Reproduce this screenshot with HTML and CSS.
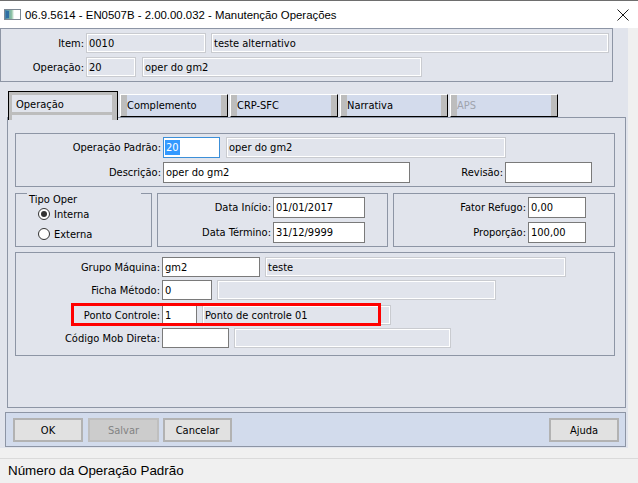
FILE: index.html
```html
<!DOCTYPE html>
<html lang="pt-BR">
<head>
  <meta charset="UTF-8">
  <title>Manutenção Operações</title>
  <link rel="stylesheet" href="styles.css">
</head>
<body>

  <div class="titlebar">
    <svg class="app-icon" width="18" height="12" viewBox="0 0 18 12">
      <defs>
        <linearGradient id="ig" x1="0" x2="1" y1="0" y2="0">
          <stop offset="0" stop-color="#3d7fb0"/>
          <stop offset="0.45" stop-color="#8fc3a4"/>
          <stop offset="0.6" stop-color="#ffffff"/>
        </linearGradient>
      </defs>
      <rect x="0.5" y="0.5" width="16" height="10" fill="url(#ig)" stroke="#7d8893"/>
      <rect x="2" y="2" width="3" height="7" fill="#2f6fa3"/>
    </svg>
    <span class="title">06.9.5614 - EN0507B - 2.00.00.032 - Manutenção Operações</span>
    <svg class="close" width="12" height="12" viewBox="0 0 12 12">
      <path d="M0.5 0.5 L11.5 11.5 M11.5 0.5 L0.5 11.5" stroke="#1a1a1a" stroke-width="1"/>
    </svg>
  </div>

  <div class="main">
    <div class="header">
      <div class="row">
        <span class="lbl lbl-head">Item:</span>
        <div class="fld ro w120">0010</div>
        <div class="fld ro w398 gap5">teste alternativo</div>
      </div>
      <div class="row row-next">
        <span class="lbl lbl-head">Operação:</span>
        <div class="fld ro w50">20</div>
        <div class="fld ro w280 gap6">oper do gm2</div>
      </div>
    </div>

    <div class="tabs">
      <div class="tab active">Operação</div>
      <div class="tab">Complemento</div>
      <div class="tab">CRP-SFC</div>
      <div class="tab">Narrativa</div>
      <div class="tab disabled">APS</div>
    </div>

    <div class="panel">
      <div class="group group-top">
        <div class="row r21">
          <span class="lbl lbl-145">Operação Padrão:</span>
          <div class="fld focus w57"><span class="sel">20</span></div>
          <div class="fld ro w280 gap6">oper do gm2</div>
        </div>
        <div class="row r21 row-next">
          <span class="lbl lbl-145">Descrição:</span>
          <div class="fld w247">oper do gm2</div>
          <span class="lbl lbl-rev">Revisão:</span>
          <div class="fld w87"></div>
        </div>
      </div>

      <div class="group-line">
        <div class="group tipo">
          <div class="legend">Tipo Oper</div>
          <label class="radio"><span class="dot checked"></span>Interna</label>
          <label class="radio"><span class="dot"></span>Externa</label>
        </div>
        <div class="group datas">
          <div class="row r21">
            <span class="lbl lbl-113">Data Início:</span>
            <div class="fld w92">01/01/2017</div>
          </div>
          <div class="row r21 row-next">
            <span class="lbl lbl-113">Data Término:</span>
            <div class="fld w92">31/12/9999</div>
          </div>
        </div>
        <div class="group fator">
          <div class="row r21">
            <span class="lbl lbl-132">Fator Refugo:</span>
            <div class="fld w58">0,00</div>
          </div>
          <div class="row r21 row-next">
            <span class="lbl lbl-132">Proporção:</span>
            <div class="fld w58">100,00</div>
          </div>
        </div>
      </div>

      <div class="group group-maq">
        <div class="row">
          <span class="lbl lbl-144">Grupo Máquina:</span>
          <div class="fld w98">gm2</div>
          <div class="fld ro w301 gap5">teste</div>
        </div>
        <div class="row row-b">
          <span class="lbl lbl-144">Ficha Método:</span>
          <div class="fld w50">0</div>
          <div class="fld ro w279 gap5"></div>
        </div>
        <div class="row row-c">
          <span class="lbl lbl-144">Ponto Controle:</span>
          <div class="fld w35">1</div>
          <div class="fld ro w189 gap5">Ponto de controle 01</div>
        </div>
        <div class="row row-b">
          <span class="lbl lbl-144">Código Mob Direta:</span>
          <div class="fld w67"></div>
          <div class="fld ro w217 gap5"></div>
        </div>
        <div class="highlight"></div>
      </div>
    </div>

    <div class="buttonbar">
      <button class="btn w70">OK</button>
      <button class="btn w71 gap5" disabled>Salvar</button>
      <button class="btn w69 gap4">Cancelar</button>
      <button class="btn w70 push">Ajuda</button>
    </div>
  </div>

  <div class="status">Número da Operação Padrão</div>

</body>
</html>
```

FILE: styles.css
```css
body {
  margin: 0;
  width: 638px;
  height: 483px;
  overflow: hidden;
  background: #f0f0f0;
  font-family: 'DejaVu Sans Condensed', 'DejaVu Sans', sans-serif;
  font-size: 11px;
  color: #000;
}
.titlebar {
  height: 27px;
  background: #fff;
  border-top: 1px solid #6e6e6e;
  display: flex;
  align-items: center;
}
.app-icon {
  margin-left: 4px;
  margin-top: 1px;
}
.title {
  margin-left: 3px;
  font-family: 'Liberation Sans', Arial, sans-serif;
  font-size: 11.4px;
  color: #000;
}
.close {
  margin-left: auto;
  margin-right: 9px;
}
.main {
  width: 628px;
  height: 420px;
  background: #e1e4ec;
}
.header {
  width: 613px;
  height: 54px;
  box-sizing: border-box;
  border: 1px solid #8d95a5;
  padding-top: 4px;
}
.row {
  display: flex;
  align-items: center;
  height: 20px;
}
.r21 {
  height: 21px;
}
.row-next {
  margin-top: 4px;
}
.row-b {
  margin-top: 3px;
}
.row-c {
  margin-top: 5px;
}
.lbl {
  text-align: right;
  white-space: nowrap;
  flex-shrink: 0;
}
.lbl-head { width: 83px; }
.lbl-145 { width: 145px; }
.lbl-144 { width: 144px; }
.lbl-113 { width: 113px; }
.lbl-132 { width: 132px; }
.lbl-rev { width: 93px; }

.fld {
  height: 100%;
  box-sizing: border-box;
  margin-left: 2px;
  padding: 0 2px;
  background: #fff;
  border: 1px solid #7a7a7a;
  display: flex;
  align-items: center;
  white-space: nowrap;
  overflow: hidden;
  flex-shrink: 0;
}
.fld.ro {
  background: #e1e4ec;
  border-color: #c9cbd0;
  box-shadow: inset 0 0 0 1px #fff;
}
.fld.focus {
  border-color: #3c8fd8;
  padding-left: 1px;
}
.sel {
  background: #3399ff;
  color: #fff;
  padding: 1px 1px;
}
.gap4 { margin-left: 4px; }
.gap5 { margin-left: 5px; }
.gap6 { margin-left: 6px; }
.w35 { width: 35px; }
.w50 { width: 50px; }
.w57 { width: 57px; }
.w58 { width: 58px; }
.w67 { width: 67px; }
.w69 { width: 69px; }
.w70 { width: 70px; }
.w71 { width: 71px; }
.w87 { width: 87px; }
.w92 { width: 92px; }
.w98 { width: 98px; }
.w120 { width: 120px; }
.w189 { width: 189px; }
.w217 { width: 217px; }
.w247 { width: 247px; }
.w279 { width: 279px; }
.w280 { width: 280px; }
.w301 { width: 301px; }
.w398 { width: 398px; }

/* tabs */
.tabs {
  display: flex;
  align-items: flex-end;
  height: 26px;
  margin-top: 9px;
  padding-left: 8px;
}
.tab {
  width: 108px;
  height: 23px;
  box-sizing: border-box;
  margin-left: 2px;
  padding-left: 6px;
  background: #d3dbec;
  border-top: 1px solid #fff;
  border-left: 1px solid #fff;
  border-right: 1px solid #000;
  border-bottom: 1px solid #000;
  box-shadow: inset 6px 0 #bdbdbd, inset -6px 0 #bdbdbd;
  display: flex;
  align-items: center;
}
.tab.active {
  width: 110px;
  height: 29px;
  margin-left: 0;
  margin-bottom: -3px;
  padding-left: 7px;
  padding-bottom: 3px;
  position: relative;
  z-index: 1;
  background: #e1e4ec;
  border: 1px solid #000;
  border-bottom: none;
  box-shadow: inset 3px 3px #bdbdbd, inset -5px 0 #bdbdbd, inset 0 -5px #e1e4ec, inset 0 -8px #bdbdbd;
}
.tab.disabled {
  color: #a0a4ad;
}

.panel {
  width: 619px;
  height: 291px;
  box-sizing: border-box;
  margin-left: 7px;
  border: 1px solid #8d95a5;
  padding: 15px 0 0 7px;
}
.group {
  box-sizing: border-box;
  border: 1px solid #8d95a5;
}
.group-top {
  width: 600px;
  height: 54px;
  padding-top: 3px;
}
.group-line {
  display: flex;
  margin-top: 6px;
  height: 54px;
}
.group-line .group {
  height: 54px;
  padding-top: 3px;
}
.tipo {
  width: 137px;
}
.datas {
  width: 231px;
  margin-left: 5px;
}
.fator {
  width: 222px;
  margin-left: 5px;
}
.legend {
  margin: -4px 0 -2px 11px;
  width: 112px;
  height: 13px;
  padding-left: 2px;
  background: #e1e4ec;
  line-height: 13px;
}
.radio {
  display: flex;
  align-items: center;
  height: 20px;
  padding-left: 22px;
}
.dot {
  width: 12px;
  height: 12px;
  box-sizing: border-box;
  border: 1px solid #333;
  border-radius: 50%;
  background: #fff;
  margin-right: 4px;
  display: flex;
  align-items: center;
  justify-content: center;
}
.dot.checked::after {
  content: "";
  width: 6px;
  height: 6px;
  border-radius: 50%;
  background: #333;
}
.group-maq {
  position: relative;
  width: 600px;
  height: 104px;
  margin-top: 5px;
  padding-top: 4px;
}
.highlight {
  position: absolute;
  left: 55px;
  top: 50px;
  width: 310px;
  height: 23px;
  box-sizing: border-box;
  border: 3px solid #ff0000;
}

/* buttons */
.buttonbar {
  width: 621px;
  height: 35px;
  box-sizing: border-box;
  margin: 4px 0 0 5px;
  padding: 5px 6px 0 7px;
  background: #d2dbec;
  border: 1px solid #8d95a5;
  display: flex;
  align-items: flex-start;
}
.btn {
  height: 24px;
  box-sizing: border-box;
  background: #e1e1e1;
  border: 2px solid #b2b2b2;
  font-family: 'DejaVu Sans Condensed', 'DejaVu Sans', sans-serif;
  font-size: 11px;
  color: #000;
  padding: 0;
}
.btn:disabled {
  background: #cccccc;
  border-color: #bfbfbf;
  color: #838383;
}
.push {
  margin-left: auto;
}

.status {
  margin-top: 10px;
  border-top: 1px solid #dadada;
  padding: 4px 0 0 8px;
  font-family: 'Liberation Sans', Arial, sans-serif;
  font-size: 13.4px;
  color: #000;
}
```
